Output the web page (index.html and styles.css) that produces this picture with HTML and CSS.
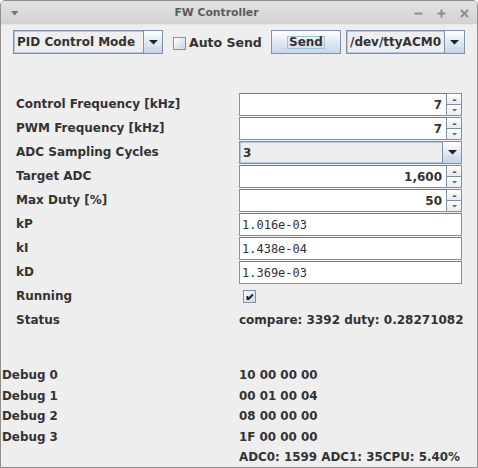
FILE: index.html
```html
<!DOCTYPE html>
<html>
<head>
<meta charset="utf-8">
<title>FW Controller</title>
<link rel="stylesheet" href="styles.css">
</head>
<body>
<div class="window">
  <div class="titlebar">
    <div class="tb-left">
      <svg width="8" height="5" viewBox="0 0 8 5"><path d="M0 0H7.5L3.75 4.5Z" fill="#777"/></svg>
    </div>
    <div class="tb-title">FW Controller</div>
    <div class="tb-right">
      <svg class="wm-min" width="9" height="9" viewBox="0 0 9 9"><rect x="0.5" y="3.5" width="8" height="2" fill="#8e8e8e"/></svg>
      <svg class="wm-max" width="9" height="9" viewBox="0 0 9 9"><rect x="0.5" y="3.5" width="8" height="2" fill="#8e8e8e"/><rect x="3.5" y="0.5" width="2" height="8" fill="#8e8e8e"/></svg>
      <svg class="wm-close" width="9" height="9" viewBox="0 0 9 9"><path d="M1 1L8 8M8 1L1 8" stroke="#8e8e8e" stroke-width="2"/></svg>
    </div>
  </div>
  <div class="content">
    <div class="toolbar">
      <div class="combo combo-mode">
        <span class="combo-text">PID Control Mode</span>
        <span class="combo-arrow"><svg width="9" height="5" viewBox="0 0 9 5"><path d="M0 0H9L4.5 4.5Z" fill="#222"/></svg></span>
      </div>
      <label class="check-label">
        <span class="checkbox"></span>
        <span>Auto Send</span>
      </label>
      <button class="btn"><span class="focus">Send</span></button>
      <div class="combo combo-port">
        <span class="combo-text">/dev/ttyACM0</span>
        <span class="combo-arrow"><svg width="9" height="5" viewBox="0 0 9 5"><path d="M0 0H9L4.5 4.5Z" fill="#222"/></svg></span>
      </div>
    </div>

    <div class="form">
      <div class="label">Control Frequency [kHz]</div>
      <div class="spinner">
        <span class="spin-field">7</span>
        <span class="spin-btns">
          <span class="spin-btn"><svg width="5" height="3" viewBox="0 0 5 3"><path d="M0 3H5L2.5 0.5Z" fill="#666"/></svg></span>
          <span class="spin-btn"><svg width="5" height="3" viewBox="0 0 5 3"><path d="M0 0H5L2.5 2.5Z" fill="#666"/></svg></span>
        </span>
      </div>

      <div class="label">PWM Frequency [kHz]</div>
      <div class="spinner">
        <span class="spin-field">7</span>
        <span class="spin-btns">
          <span class="spin-btn"><svg width="5" height="3" viewBox="0 0 5 3"><path d="M0 3H5L2.5 0.5Z" fill="#666"/></svg></span>
          <span class="spin-btn"><svg width="5" height="3" viewBox="0 0 5 3"><path d="M0 0H5L2.5 2.5Z" fill="#666"/></svg></span>
        </span>
      </div>

      <div class="label">ADC Sampling Cycles</div>
      <div class="combo combo-adc">
        <span class="combo-text">3</span>
        <span class="combo-arrow"><svg width="9" height="5" viewBox="0 0 9 5"><path d="M0 0H9L4.5 4.5Z" fill="#222"/></svg></span>
      </div>

      <div class="label">Target ADC</div>
      <div class="spinner">
        <span class="spin-field">1,600</span>
        <span class="spin-btns">
          <span class="spin-btn"><svg width="5" height="3" viewBox="0 0 5 3"><path d="M0 3H5L2.5 0.5Z" fill="#666"/></svg></span>
          <span class="spin-btn"><svg width="5" height="3" viewBox="0 0 5 3"><path d="M0 0H5L2.5 2.5Z" fill="#666"/></svg></span>
        </span>
      </div>

      <div class="label">Max Duty [%]</div>
      <div class="spinner">
        <span class="spin-field">50</span>
        <span class="spin-btns">
          <span class="spin-btn"><svg width="5" height="3" viewBox="0 0 5 3"><path d="M0 3H5L2.5 0.5Z" fill="#666"/></svg></span>
          <span class="spin-btn"><svg width="5" height="3" viewBox="0 0 5 3"><path d="M0 0H5L2.5 2.5Z" fill="#666"/></svg></span>
        </span>
      </div>

      <div class="label">kP</div>
      <div class="textfield">1.016e-03</div>

      <div class="label">kI</div>
      <div class="textfield">1.438e-04</div>

      <div class="label">kD</div>
      <div class="textfield">1.369e-03</div>

      <div class="label">Running</div>
      <div class="check-cell">
        <span class="checkbox checked"><svg width="9" height="9" viewBox="0 0 9 9"><path d="M1.5 4V8H4L8.5 3.2L7.2 1.8L3.4 5.8V4Z" fill="#1e1e1e"/></svg></span>
      </div>

      <div class="label">Status</div>
      <div class="value">compare: 3392 duty: 0.28271082</div>
    </div>

    <div class="debug">
      <div class="label">Debug 0</div><div class="value">10 00 00 00</div>
      <div class="label">Debug 1</div><div class="value">00 01 00 04</div>
      <div class="label">Debug 2</div><div class="value">08 00 00 00</div>
      <div class="label">Debug 3</div><div class="value">1F 00 00 00</div>
      <div class="label"></div><div class="value">ADC0: 1599 ADC1: 35CPU: 5.40%</div>
    </div>
  </div>
</div>
</body>
</html>
```

FILE: styles.css
```css
html, body {
  margin: 0;
  padding: 0;
  background: #ffffff;
}

body {
  font-family: "DejaVu Sans", "Liberation Sans", sans-serif;
  font-size: 12px;
  font-weight: bold;
  color: #333333;
}

.window {
  width: 478px;
  height: 468px;
  box-sizing: border-box;
  border: 1px solid #8f8f8f;
  border-radius: 5px 5px 0 0;
  background: #eeeeee;
  overflow: hidden;
  display: flex;
  flex-direction: column;
}

/* ---------- title bar ---------- */
.titlebar {
  height: 23px;
  flex: none;
  display: flex;
  align-items: center;
  background: linear-gradient(#e2e2e2, #d2d2d2);
  border-bottom: 1px solid #e6e6e6;
}

.tb-left {
  width: 28px;
  display: flex;
  justify-content: flex-start;
  padding-left: 10px;
  box-sizing: border-box;
  padding-top: 1px;
}

.tb-title {
  flex: 1;
  text-align: center;
  font-size: 10.8px;
  color: #5c5c5c;
}

.tb-right {
  width: 73px;
  display: flex;
  align-items: center;
  box-sizing: border-box;
  padding-left: 10px;
  gap: 14px;
  padding-top: 1px;
}

/* ---------- content ---------- */
.content {
  flex: 1;
  display: flex;
  flex-direction: column;
}

.toolbar {
  display: flex;
  align-items: center;
  padding: 5px 0 0 12px;
  height: 24px;
}

.combo {
  display: flex;
  box-sizing: border-box;
  height: 24px;
  border: 1px solid #7f91a6;
  background: #eeeeee;
}

.combo-text {
  flex: 1;
  display: flex;
  align-items: center;
  padding-left: 2px;
  border: 1px solid #b1c7de;
  border-right: none;
  white-space: nowrap;
  overflow: hidden;
}

.combo-arrow {
  display: flex;
  align-items: center;
  justify-content: center;
  border-left: 1px solid #7f91a6;
  background: linear-gradient(#ffffff, #dde7f1 55%, #c3d4e6);
}

.combo-mode {
  width: 150px;
}
.combo-mode .combo-arrow {
  width: 18px;
}

.combo-port {
  width: 119px;
  margin-left: 5px;
}
.combo-port .combo-arrow {
  width: 19px;
}

.check-label {
  width: 98px;
  margin-left: 10px;
  display: flex;
  align-items: center;
  gap: 3px;
  font-size: 12.5px;
}

.checkbox {
  width: 13px;
  height: 13px;
  box-sizing: border-box;
  border: 1px solid #7f91a6;
  background: linear-gradient(135deg, #ffffff, #dce6f0 60%, #c9d8e8);
  display: flex;
  align-items: center;
  justify-content: center;
  margin-top: 2px;
}

.btn {
  width: 70px;
  height: 24px;
  box-sizing: border-box;
  border: 1px solid #7f91a6;
  background: linear-gradient(#ffffff, #e3ebf3 45%, #c6d7e9);
  font: inherit;
  color: #333333;
  padding: 0;
  display: flex;
  align-items: center;
  justify-content: center;
}

.focus {
  border: 1px solid #a9bfd6;
  padding: 0 1px;
  line-height: 11px;
  height: 11px;
  display: inline-block;
}

/* ---------- form ---------- */
.form {
  margin-top: 38px;
  display: grid;
  grid-template-columns: 223px 223px;
  grid-auto-rows: 24px;
  padding-left: 15px;
}

.label {
  display: flex;
  align-items: center;
  white-space: nowrap;
}

.value {
  display: flex;
  align-items: center;
  white-space: nowrap;
}

.spinner {
  display: flex;
  height: 23px;
  margin-top: 1px;
}

.spin-field {
  flex: 1;
  box-sizing: border-box;
  border: 1px solid #7f91a6;
  border-top-color: #6f7f90;
  background: #ffffff;
  padding-right: 4px;
  display: flex;
  align-items: center;
  justify-content: flex-end;
}

.spin-btns {
  width: 15px;
  display: flex;
  flex-direction: column;
}

.spin-btn {
  flex: 1;
  box-sizing: border-box;
  border: 1px solid #7f91a6;
  border-left: none;
  background: linear-gradient(#ffffff, #e6edf4);
  display: flex;
  align-items: center;
  justify-content: center;
}

.spin-btn + .spin-btn {
  border-top: none;
}

.combo-adc {
  height: 23px;
  margin-top: 1px;
}
.combo-adc .combo-arrow {
  width: 18px;
}

.textfield {
  height: 23px;
  margin-top: 1px;
  box-sizing: border-box;
  border: 1px solid #7f91a6;
  border-top-color: #6f7f90;
  background: #ffffff;
  font-family: "DejaVu Sans Mono", "Liberation Mono", monospace;
  font-weight: normal;
  font-size: 12px;
  color: #333333;
  padding-left: 2px;
  display: flex;
  align-items: center;
}

.check-cell {
  display: flex;
  align-items: center;
  padding-left: 4px;
}

.check-cell .checkbox {
  margin-top: 1px;
}

/* ---------- debug ---------- */
.debug {
  margin-top: 33px;
  display: grid;
  grid-template-columns: 237px 1fr;
  grid-auto-rows: 20.5px;
  padding-left: 1px;
  font-size: 11.9px;
}
```
